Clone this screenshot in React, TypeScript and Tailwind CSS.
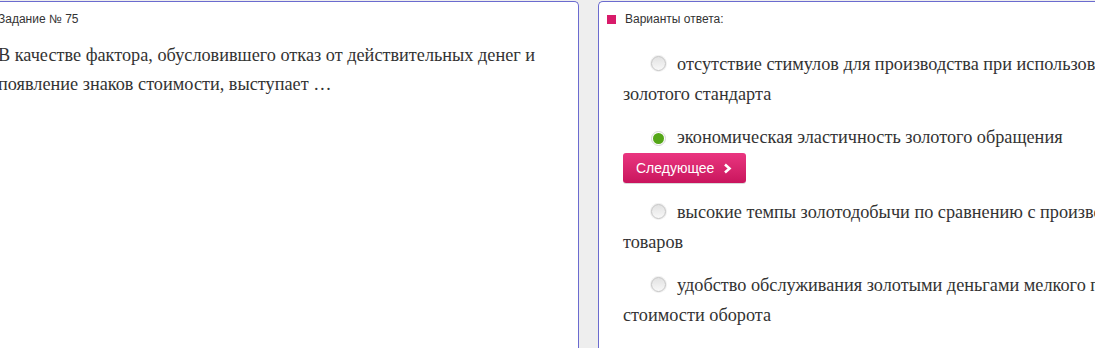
import React from "react";

const serif = { fontFamily: '"Liberation Serif", "Times New Roman", serif' };

const options = [
  { text: "отсутствие стимулов для производства при использовании золотого стандарта", checked: false },
  { text: "экономическая эластичность золотого обращения", checked: true },
  { text: "высокие темпы золотодобычи по сравнению с производством товаров", checked: false },
  { text: "удобство обслуживания золотыми деньгами мелкого по стоимости оборота", checked: false },
];

function Radio({ checked }: { checked: boolean }) {
  if (checked) {
    return (
      <span className="inline-flex items-center justify-center w-[15px] h-[15px] rounded-full bg-white border border-[#d6d6d6] align-[-1px] mr-[11px]">
        <span className="block w-[11px] h-[11px] rounded-full bg-[#55a618]" />
      </span>
    );
  }
  return (
    <span className="inline-block w-[15px] h-[15px] rounded-full border border-[#c4c4c4] bg-gradient-to-b from-[#e2e2e2] to-[#f8f8f8] shadow-[0_0_0_1px_#f0f0f0] align-[-1px] mr-[11px]" />
  );
}

export default function App() {
  return (
    <div className="flex gap-[19px] h-[348px] overflow-hidden bg-[#eeeeee] pt-px" style={{ fontFamily: '"Liberation Sans", Arial, sans-serif' }}>
      {/* задание */}
      <div className="w-[589px] shrink-0 ml-[-10px] bg-white border-t border-r border-[#6b6bcf] rounded-tr-[5px] pl-[8px] pt-[9px]">
        <div className="text-[12px] leading-[16px] text-[#333]">Задание № 75</div>
        <p className="mt-[14px] pr-[30px] text-[18.25px] leading-[29px] text-[#333]" style={serif}>
          В качестве фактора, обусловившего отказ от действительных денег и появление знаков стоимости, выступает …
        </p>
      </div>

      {/* варианты */}
      <div className="w-[600px] shrink-0 bg-white border-t border-l border-[#6b6bcf] rounded-tl-[5px] pt-[9px]">
        <div className="flex items-center gap-[9px] pl-[8px] h-[16px]">
          <span className="block w-[9px] h-[9px] bg-[#d81b6a]" />
          <span className="text-[12px] text-[#333]">Варианты ответа:</span>
        </div>
        <div className="pl-[24px] pr-[36px] pt-[22px] text-[18.25px] leading-[30px] text-[#333]" style={serif}>
          {options.map((o, i) => (
            <div key={i}>
              <p className="mb-[13px]">
                <span className="inline-block w-[28px]" />
                <Radio checked={o.checked} />
                {o.text}
              </p>
              {o.checked && (
                <button className="flex items-center gap-[9px] h-[30px] w-[123px] -mt-[12px] mb-[14px] pl-[13px] rounded-[3px] bg-gradient-to-b from-[#ea3580] to-[#c9145d] text-white text-[14px] leading-none shadow-[0_1px_0_rgba(0,0,0,0.15)]" style={{ fontFamily: '"Liberation Sans", Arial, sans-serif' }}>
                  Следующее
                  <svg width="9" height="11" viewBox="0 0 9 11" fill="none">
                    <path d="M2 1.5 L6.5 5.5 L2 9.5" stroke="white" strokeWidth="2.6" strokeLinejoin="miter" />
                  </svg>
                </button>
              )}
            </div>
          ))}
        </div>
      </div>
    </div>
  );
}
